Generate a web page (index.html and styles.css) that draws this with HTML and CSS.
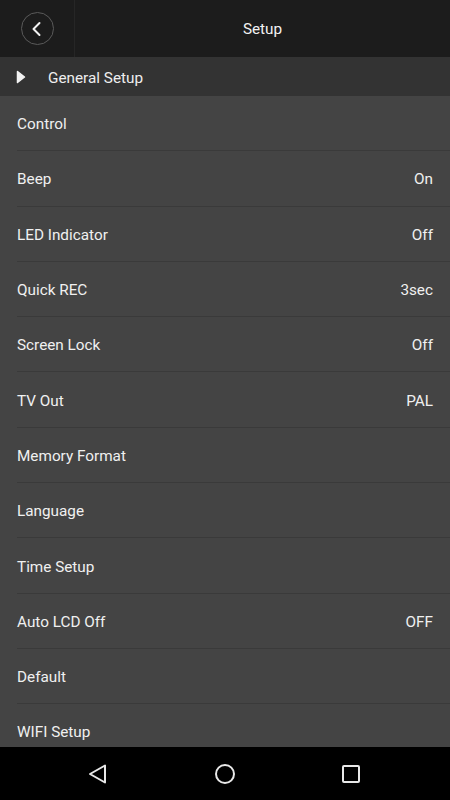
FILE: index.html
```html
<!DOCTYPE html>
<html>
<head>
<meta charset="utf-8">
<link rel="stylesheet" href="styles.css">
</head>
<body>
<div class="app">
  <header class="topbar">
    <div class="back-cell">
      <div class="back-btn">
        <svg width="14" height="16" viewBox="0 0 14 16"><path d="M9.5 2 L3.5 8 L9.5 14" fill="none" stroke="#f2f2f2" stroke-width="2" stroke-linecap="round" stroke-linejoin="round"/></svg>
      </div>
    </div>
    <div class="title">Setup</div>
  </header>
  <div class="section">
    <svg class="sec-arrow" width="10" height="14" viewBox="0 0 10 14"><path d="M1.5 1.5 L8.5 7 L1.5 12.5 Z" fill="#f2f2f2" stroke="#f2f2f2" stroke-width="1.5" stroke-linejoin="round"/></svg>
    <span>General Setup</span>
  </div>
  <ul class="list">
    <li class="row"><span>Control</span></li>
    <li class="row"><span>Beep</span><span class="val">On</span></li>
    <li class="row"><span>LED Indicator</span><span class="val">Off</span></li>
    <li class="row"><span>Quick REC</span><span class="val">3sec</span></li>
    <li class="row"><span>Screen Lock</span><span class="val">Off</span></li>
    <li class="row"><span>TV Out</span><span class="val">PAL</span></li>
    <li class="row"><span>Memory Format</span></li>
    <li class="row"><span>Language</span></li>
    <li class="row"><span>Time Setup</span></li>
    <li class="row"><span>Auto LCD Off</span><span class="val">OFF</span></li>
    <li class="row"><span>Default</span></li>
    <li class="row"><span>WIFI Setup</span></li>
  </ul>
  <nav class="navbar">
    <svg width="22" height="22" viewBox="0 0 22 22"><path d="M18 2.5 L18 19.5 L3 11 Z" fill="none" stroke="#e8e8e8" stroke-width="2" stroke-linejoin="round"/></svg>
    <svg width="22" height="22" viewBox="0 0 22 22"><circle cx="11" cy="11" r="9" fill="none" stroke="#e8e8e8" stroke-width="2"/></svg>
    <svg width="22" height="22" viewBox="0 0 22 22"><rect x="3" y="3" width="16" height="16" rx="1" fill="none" stroke="#e8e8e8" stroke-width="2"/></svg>
  </nav>
</div>
</body>
</html>
```

FILE: styles.css
```css
* { box-sizing: border-box; margin: 0; padding: 0; }
html, body { width: 450px; height: 800px; overflow: hidden; }
body { background: #444444; font-family: Roboto, "Noto Sans", sans-serif; color: #f0f0f0; }
.app { display: flex; flex-direction: column; height: 800px; }
.topbar { height: 57px; flex: none; display: flex; background: #1c1c1c; }
.back-cell { width: 75px; display: flex; align-items: center; justify-content: center; border-right: 1px solid #262626; }
.back-btn { width: 33px; height: 33px; border: 1px solid #5a5a5a; border-radius: 50%; display: flex; align-items: center; justify-content: center; }
.back-btn svg { margin-left: -1px; }
.title { flex: 1; display: flex; align-items: center; justify-content: center; font-size: 15.3px; color: #f2f2f2; padding-top: 1px; }
.section { height: 39px; flex: none; background: #333333; display: flex; align-items: center; padding-left: 16px; padding-top: 2px; font-size: 15.3px; color: #eeeeee; }
.sec-arrow { margin-right: 22px; margin-top: -1px; }
.list { list-style: none; flex: 1; overflow: hidden; background: #444444; }
.row { height: 55.3px; display: flex; align-items: center; justify-content: space-between; margin-left: 17px; padding-right: 17px; border-bottom: 1px solid #3a3a3a; font-size: 15.3px; color: #f0f0f0; padding-top: 2px; }
.val { color: #f0f0f0; }
.navbar { height: 53px; flex: none; background: #000; display: flex; align-items: center; justify-content: space-between; padding: 0 88px 0 87px; }
```
